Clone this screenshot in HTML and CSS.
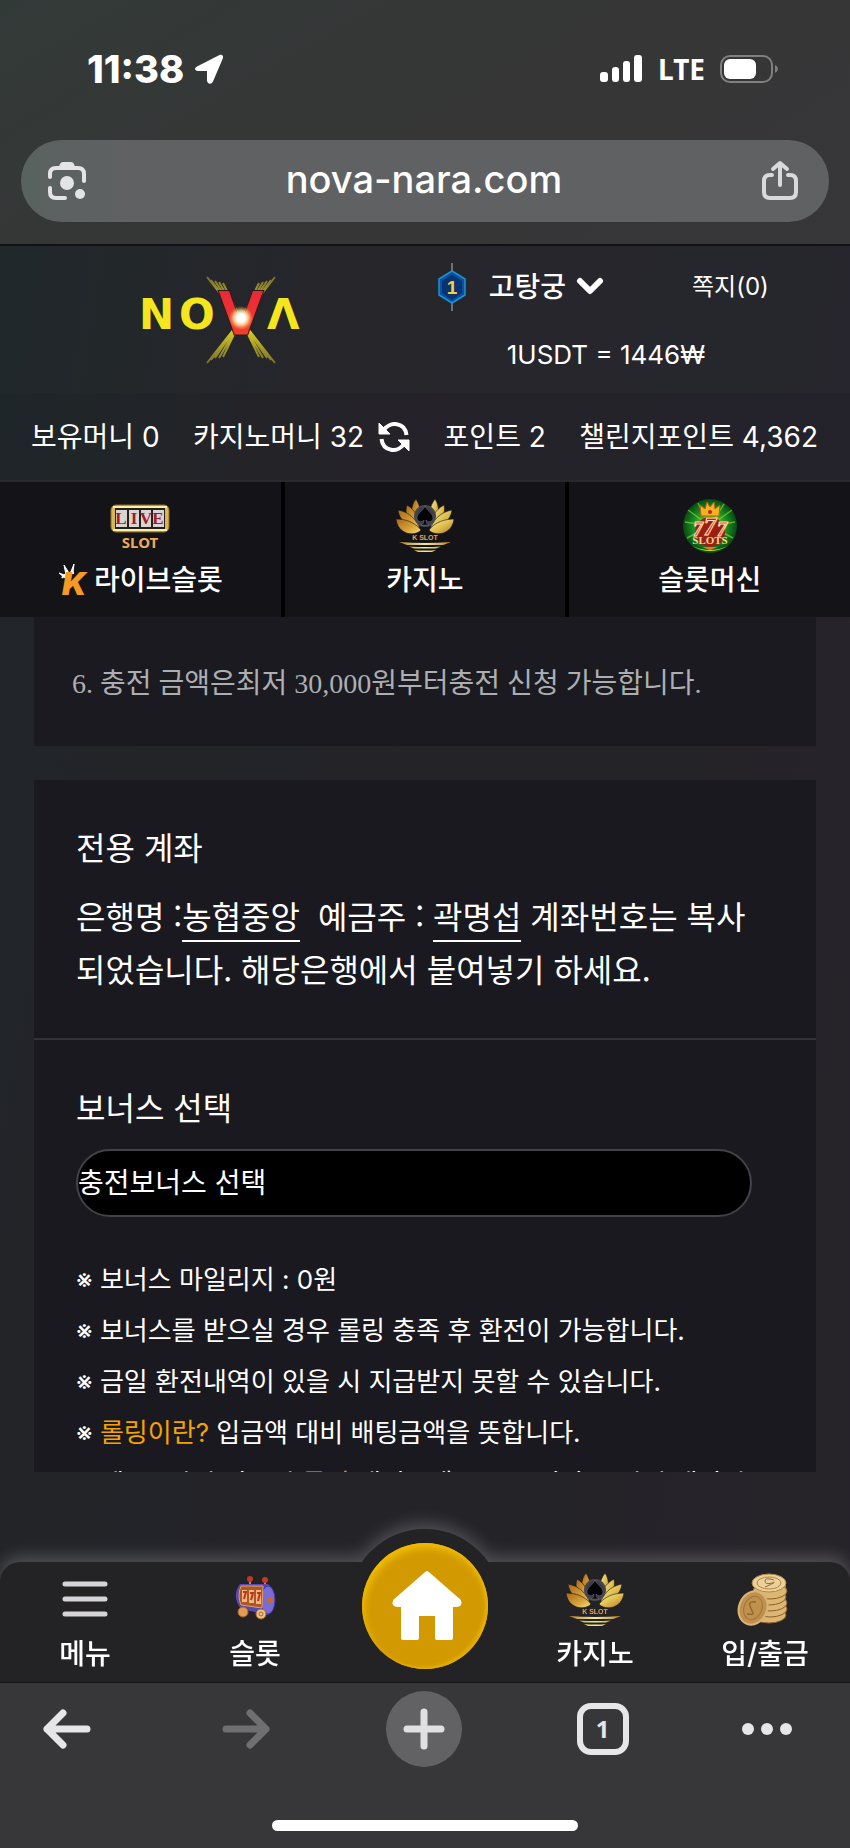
FILE: index.html
```html
<!DOCTYPE html>
<html lang="ko">

<head>
    <meta charset="UTF-8">
    <meta name="viewport" content="width=device-width, initial-scale=1.0">
    <title>nova-nara.com</title>
    <link rel="stylesheet" href="styles.css">
</head>

<body>
    <!-- shared icons -->
    <svg class="sprite" width="0" height="0" aria-hidden="true">
        <defs>
            <linearGradient id="goldLeft" x1="0" y1="0" x2="1" y2="1">
                <stop offset="0" stop-color="#a8671d" />
                <stop offset="0.6" stop-color="#d9a43a" />
                <stop offset="1" stop-color="#f6e27c" />
            </linearGradient>
            <linearGradient id="goldRight" x1="0" y1="0" x2="1" y2="1">
                <stop offset="0" stop-color="#f8f09a" />
                <stop offset="0.5" stop-color="#e0c050" />
                <stop offset="1" stop-color="#b0781f" />
            </linearGradient>
            <linearGradient id="goldBar" x1="0" y1="0" x2="1" y2="0">
                <stop offset="0" stop-color="#b8862b" />
                <stop offset="0.5" stop-color="#f5ec8c" />
                <stop offset="1" stop-color="#b8862b" />
            </linearGradient>
            <radialGradient id="spadeBg">
                <stop offset="0" stop-color="#15151b" />
                <stop offset="1" stop-color="#4c4c58" />
            </radialGradient>
        </defs>
        <symbol id="lotus" viewBox="0 0 60 54">
            <g fill="url(#goldLeft)" stroke="#17161a" stroke-width="0.6">
                <path d="M23 28C15 20 15 8 21 1c5 8 6 17 2 27z" />
                <path d="M24 31C13 25 9 15 12 7c8 5 13 13 12 24z" />
                <path d="M25 33C12 30 4 21 3 12c11 2 20 10 22 21z" />
                <path d="M26 32C20 39 3 37 1 21c9 0 19 3 25 11z" />
            </g>
            <g fill="url(#goldRight)" stroke="#17161a" stroke-width="0.6">
                <path d="M37 28C45 20 45 8 40 1c-6 8-7 17-3 27z" />
                <path d="M36 31C47 25 51 15 49 7c-9 5-14 13-13 24z" />
                <path d="M35 33C48 30 56 21 57 12c-11 2-20 10-22 21z" />
                <path d="M34 32C40 39 57 37 59 21c-9 0-19 3-25 11z" />
            </g>
            <circle cx="30" cy="18" r="11" fill="url(#spadeBg)" />
            <path d="M30 8c-1 4-8 7-8 12 0 4 5 5 7 2 0 3-1 4-3 5h8c-2-1-3-2-3-5 2 3 7 2 7-2 0-5-7-8-8-12z" fill="#050507" stroke="#8d8d98" stroke-width="0.4" />
            <text x="30" y="42" class="lotus-text">K SLOT</text>
            <path d="M4 44q26 2 52 0l-8 3H12zM14 48.500q16 1 32 0l-5 2H19zM19 52q12 1 22 0l-4 2H23z" fill="url(#goldBar)" />
        </symbol>
    </svg>

    <!-- Browser top -->
    <div class="browser-top">
        <div class="status">
            <div class="status-left">
                <span class="clock">11:38</span>
                <svg width="30" height="30" viewBox="0 0 30 30" fill="#fff">
                    <path d="M3 12.500 25 1.200c3-1.500 5 .5 3.700 3.600L19 27.500c-1.500 3.500-6 2.500-6-1V17H4.500C.8 17-.2 14.200 3 12.500z" />
                </svg>
            </div>
            <div class="status-right">
                <svg width="43" height="28" viewBox="0 0 43 28" fill="#fff">
                    <rect x="0" y="17" width="8" height="10" rx="3" />
                    <rect x="12" y="12" width="7" height="15" rx="3" />
                    <rect x="23" y="6" width="7" height="21" rx="3" />
                    <rect x="34" y="0" width="8" height="27" rx="3" />
                </svg>
                <span class="network">LTE</span>
                <svg width="59" height="28" viewBox="0 0 59 28">
                    <rect x="1" y="1" width="51" height="26" rx="9" fill="none" stroke="#7f817f" stroke-width="2" />
                    <rect x="4" y="4" width="32" height="20" rx="6" fill="#fff" />
                    <path d="M55 10q3 1.500 3 4t-3 4z" fill="#7f817f" />
                </svg>
            </div>
        </div>
        <div class="address">
            <button class="plain" aria-label="Lens">
                <svg width="40" height="40" viewBox="0 0 40 40">
                    <g fill="none" stroke="#e3e4e6" stroke-width="4" stroke-linecap="round" stroke-linejoin="round">
                        <path d="M3 16v-3q0-6 6-6h22q6 0 6 6v7" />
                        <path d="M3 27v4q0 6 6 6h9" />
                    </g>
                    <path d="M11 8l2-5q1-2 3-2h8q2 0 3 2l2 5z" fill="#e3e4e6" />
                    <circle cx="20" cy="22" r="7" fill="#e3e4e6" />
                    <circle cx="33" cy="33" r="5" fill="#e3e4e6" />
                </svg>
            </button>
            <span class="url">nova-nara.com</span>
            <button class="plain" aria-label="Share">
                <svg width="38" height="40" viewBox="0 0 38 40" fill="none" stroke="#d9dadc" stroke-width="4" stroke-linecap="round" stroke-linejoin="round">
                    <path d="M11 14H9q-6 0-6 6v11q0 6 6 6h20q6 0 6-6V20q0-6-6-6h-2" />
                    <path d="M19 24V3M12 8l7-6 7 6" />
                </svg>
            </button>
        </div>
    </div>

    <header class="site-header">
        <a href="#" class="logo" aria-label="NOVA">
            <svg width="166" height="90" viewBox="0 0 166 90">
                <defs>
                    <linearGradient id="ray" x1="0" y1="0" x2="0" y2="1">
                        <stop offset="0" stop-color="#77702a" />
                        <stop offset="0.5" stop-color="#f7e825" />
                        <stop offset="1" stop-color="#77702a" />
                    </linearGradient>
                    <radialGradient id="flare">
                        <stop offset="0.35" stop-color="#fff" />
                        <stop offset="0.6" stop-color="#ffe9a0" stop-opacity="0.8" />
                        <stop offset="1" stop-color="#ffb060" stop-opacity="0" />
                    </radialGradient>
                    <linearGradient id="red" x1="0" y1="0" x2="0" y2="1">
                        <stop offset="0" stop-color="#e8203c" />
                        <stop offset="1" stop-color="#f04a22" />
                    </linearGradient>
                </defs>
                <g fill="none" stroke="url(#ray)" stroke-width="2">
                    <path d="M68 2 136 88M72 5l60 80M76 6l52 77M80 7l44 76M84 8l36 74" />
                    <path d="M136 2 68 88M132 5 72 85M128 6 76 83M124 7 80 83M120 8 84 82" />
                </g>
                <text x="0" y="54" class="logo-yellow">N</text>
                <text x="40" y="54" class="logo-yellow">O</text>
                <text x="128" y="54" class="logo-yellow">Λ</text>
                <text x="102" y="60" class="logo-red">V</text>
                <circle cx="102" cy="43" r="12" fill="url(#flare)" />
            </svg>
        </a>
        <div class="account">
            <div class="account-row">
                <svg width="28" height="48" viewBox="0 0 28 48">
                    <path d="M14 0v48" stroke="#8b8a86" stroke-width="1.500" />
                    <path d="M14 8l13 8v16l-13 8-13-8V16z" fill="#0b4f9d" stroke="#1795d8" stroke-width="1.500" />
                    <path d="M14 12l10 6v12l-10 7-10-7V18z" fill="#073373" />
                    <text x="14" y="31" class="level">1</text>
                </svg>
                <a href="#" class="user">고탕궁
                    <svg width="28" height="18" viewBox="0 0 28 18" fill="none" stroke="#fff" stroke-width="6" stroke-linecap="round" stroke-linejoin="round">
                        <path d="M4 3l10 10L24 3" />
                    </svg>
                </a>
                <a href="#" class="message">쪽지(0)</a>
            </div>
            <p class="rate">1USDT = 1446₩</p>
        </div>
    </header>

    <div class="wallet">
        <span>보유머니 0</span>
        <span class="casino-money">카지노머니 32
            <button class="plain" aria-label="새로고침">
                <svg width="32" height="32" viewBox="0 0 32 32">
                    <g fill="none" stroke="#fff" stroke-width="4">
                        <path d="M6 9C12 0 27 1 28.500 14" />
                        <path d="M26 23C20 32 5 31 3.500 18" />
                    </g>
                    <path d="M1 2v11h11zM31 30V19H20z" fill="#fff" stroke="#fff" stroke-linejoin="round" />
                </svg>
            </button>
        </span>
        <span>포인트 2</span>
        <span>챌린지포인트 4,362</span>
    </div>

    <nav class="games">
        <a href="#">
            <svg width="60" height="54" viewBox="0 0 60 54">
                <rect x="1" y="7" width="58" height="27" rx="5" fill="#d9b654" stroke="#8e6b24" />
                <path d="M3 9h54M3 32h54" stroke="#fbf0a4" stroke-width="2" />
                <rect x="5" y="10" width="50" height="21" fill="#24201d" />
                <path d="M6 12h11v17H6zM19 12h10v17H19zM31 12h10v17H31zM43 12h11v17H43z" fill="#d9d3d2" />
                <text x="11" y="26" class="live">L</text>
                <text x="24" y="26" class="live">I</text>
                <text x="36" y="26" class="live">V</text>
                <text x="48" y="26" class="live">E</text>
                <text x="30" y="50" class="slot">SLOT</text>
            </svg>
            <span class="game-name">
                <svg width="34" height="36" viewBox="0 0 34 36">
                    <path d="M1 11l8 3-2 2zM6 3l5 8-3 2zM16 2l-1 9-3 1z" fill="#fff" stroke="#fff" />
                    <path d="M4 16q4-6 12-5" fill="none" stroke="#fff" stroke-width="2" />
                    <text x="4" y="33" class="k-mark">K</text>
                </svg>
                라이브슬롯
            </span>
        </a>
        <a href="#">
            <svg width="60" height="54">
                <use href="#lotus" />
            </svg>
            <span class="game-name">카지노</span>
        </a>
        <a href="#">
            <svg width="56" height="56" viewBox="0 0 56 56">
                <defs>
                    <radialGradient id="green">
                        <stop offset="0" stop-color="#a4ef28" />
                        <stop offset="0.6" stop-color="#1f9222" />
                        <stop offset="1" stop-color="#064a12" />
                    </radialGradient>
                </defs>
                <circle cx="28" cy="28" r="27" fill="url(#green)" />
                <path d="M28 28 6 12M28 28 3 24M28 28 50 12M28 28 53 24M28 28 5 40M28 28 51 40M28 28 16 5M28 28 42 6" stroke="#8be23a" stroke-width="1.500" opacity="0.6" />
                <path d="M10 48q18 8 36 0-18 10-36 0z" fill="#c6de34" />
                <path d="M19 18 18 7l5 4 2-7 3 5 4-5 1 7 5-4-1 11z" fill="#f6b023" stroke="#b0650d" />
                <circle cx="28" cy="14" r="2" fill="#c3201c" />
                <circle cx="28" cy="34" r="15" fill="#9a2013" />
                <text x="16" y="38" class="seven">7</text>
                <text x="40" y="38" class="seven">7</text>
                <text x="28" y="37" class="seven big">7</text>
                <text x="28" y="46" class="slots">SLOTS</text>
                <path d="M20 49h16l-8 3z" fill="#e87a20" />
            </svg>
            <span class="game-name">슬롯머신</span>
        </a>
    </nav>

    <main>
        <section class="notice">
            <p>6. 충전 금액은최저 30,000원부터충전 신청 가능합니다.</p>
        </section>

        <section class="charge">
            <div class="block">
                <h2>전용 계좌</h2>
                <p class="bank">은행명 :<span class="underline">농협중앙</span>&nbsp; 예금주 : <span class="underline">곽명섭</span> 계좌번호는 복사되었습니다. 해당은행에서 붙여넣기 하세요.</p>
            </div>
            <div class="block">
                <h2><label for="bonus">보너스 선택</label></h2>
                <select id="bonus" class="bonus-select">
                    <option>충전보너스 선택</option>
                </select>
                <ul class="guide">
                    <li>※ 보너스 마일리지 : 0원</li>
                    <li>※ 보너스를 받으실 경우 롤링 충족 후 환전이 가능합니다.</li>
                    <li>※ 금일 환전내역이 있을 시 지급받지 못할 수 있습니다.</li>
                    <li>※ <b>롤링이란?</b> 입금액 대비 배팅금액을 뜻합니다.</li>
                    <li>※ 예) <b>10만원</b> 입금시 <b>롤링</b> 배팅금액 100% 이상 <b>10만원</b> 배팅시</li>
                </ul>
            </div>
        </section>
    </main>

    <nav class="dock">
        <a href="#">
            <svg width="54" height="54" viewBox="0 0 54 54" stroke="#d6d4d9" stroke-width="5" stroke-linecap="round">
                <path d="M7 12h40M7 27h40M7 42h40" />
            </svg>
            메뉴
        </a>
        <a href="#">
            <svg width="54" height="54" viewBox="0 0 54 54">
                <path d="M22 8v8M37 9v8" stroke="#b98b5b" stroke-width="2" />
                <circle cx="22" cy="7" r="3" fill="#c13a25" />
                <circle cx="37" cy="8" r="3" fill="#c13a25" />
                <path d="M12 12h28q8 6 7 17-1 11-7 14L13 37Q3 24 12 12z" fill="#5a46b5" />
                <ellipse cx="40" cy="28" rx="7" ry="14" fill="#7a6cd6" stroke="#4433a0" />
                <path d="M13 14h22l-1 22-21-3q-4-9 0-19z" fill="#a65a2c" stroke="#e0a164" />
                <path d="M14 18h5v12h-5zM21 18h5v13h-5zM28 18h5v14h-5z" fill="#f0b878" />
                <path d="M15 20h3l-2 7M22 21h3l-2 7M29 21h3l-2 8" fill="none" stroke="#c2301f" stroke-width="2" />
                <circle cx="42" cy="28" r="3" fill="#c86a2a" />
                <circle cx="15" cy="40" r="5" fill="#e39b50" stroke="#a5622c" />
                <circle cx="33" cy="42" r="5" fill="#eec487" stroke="#a5622c" />
                <circle cx="33" cy="42" r="2" fill="none" stroke="#a5622c" />
            </svg>
            슬롯
        </a>
        <div class="home-cell">
            <a href="#" class="home" aria-label="홈">
                <svg width="72" height="72" viewBox="0 0 72 72" fill="#fff" stroke="#fff" stroke-width="4" stroke-linejoin="round">
                    <path d="M38 3 6 31q-2 4 3 4h5v33h14V44h20v24h14V35h5q5 0 3-4z" />
                </svg>
            </a>
        </div>
        <a href="#">
            <svg width="60" height="54">
                <use href="#lotus" />
            </svg>
            카지노
        </a>
        <a href="#">
            <svg width="54" height="54" viewBox="0 0 54 54">
                <path d="M16 10v34q16 12 32 1V10z" fill="#b98642" />
                <g fill="#dcb673" stroke="#8f6028" stroke-width="1">
                    <ellipse cx="31" cy="43" rx="17" ry="8" />
                    <ellipse cx="32" cy="37" rx="17" ry="8" />
                    <ellipse cx="32" cy="31" rx="17" ry="8" />
                    <ellipse cx="31" cy="25" rx="17" ry="8" />
                    <ellipse cx="32" cy="19" rx="17" ry="8" />
                </g>
                <ellipse cx="31" cy="11" rx="17" ry="9" fill="#ecd09a" stroke="#b28847" />
                <ellipse cx="31" cy="11" rx="12" ry="6" fill="none" stroke="#b28847" />
                <path d="M36 8q-9-3-9 1t7 2-7 4" fill="none" stroke="#946a30" />
                <ellipse cx="15" cy="36" rx="14" ry="17" transform="rotate(22 15 36)" fill="#c0904f" stroke="#d9b478" stroke-width="2" />
                <ellipse cx="15" cy="36" rx="9" ry="12" transform="rotate(22 15 36)" fill="none" stroke="#a37336" />
                <path d="M18 30q-8-1-6 4t3 7-6 1" fill="none" stroke="#946a30" stroke-width="1.500" />
            </svg>
            입/출금
        </a>
    </nav>

    <!-- Browser bottom -->
    <footer class="browser-bottom">
        <div class="toolbar">
            <button class="plain" aria-label="Back">
                <svg width="50" height="42" viewBox="0 0 50 42" fill="none" stroke="#e6e5e8" stroke-width="7" stroke-linecap="round" stroke-linejoin="round">
                    <path d="M45 21H5M21 5 5 21l16 16" />
                </svg>
            </button>
            <button class="plain" aria-label="Forward">
                <svg width="50" height="42" viewBox="0 0 50 42" fill="none" stroke="#6f6f71" stroke-width="7" stroke-linecap="round" stroke-linejoin="round">
                    <path d="M5 21h40M29 5l16 16-16 16" />
                </svg>
            </button>
            <button class="plain" aria-label="New tab">
                <svg width="76" height="76" viewBox="0 0 76 76">
                    <circle cx="38" cy="38" r="38" fill="#626264" />
                    <path d="M38 21v34M21 38h34" stroke="#e0dfe2" stroke-width="7" stroke-linecap="round" />
                </svg>
            </button>
            <button class="plain" aria-label="Tabs">
                <span class="tabs">1</span>
            </button>
            <button class="plain more" aria-label="More">
                <svg width="50" height="12" viewBox="0 0 50 12" fill="#e6e5e8">
                    <circle cx="6" cy="6" r="6" />
                    <circle cx="25" cy="6" r="6" />
                    <circle cx="44" cy="6" r="6" />
                </svg>
            </button>
        </div>
        <div class="indicator"></div>
    </footer>
</body>

</html>
```

FILE: styles.css
```css
* {
    box-sizing: border-box;
}

body {
    margin: 0;
    height: 100vh;
    display: flex;
    flex-direction: column;
    overflow: hidden;
    font-family: Inter, "Noto Sans CJK KR", sans-serif;
    font-size: 28px;
    line-height: 36px;
    color: #fff;
    background: linear-gradient(100deg, #212529 0%, #242328 60%, #27232a 100%);
}

a {
    color: inherit;
    text-decoration: none;
}

h2,
p,
ul {
    margin: 0;
    padding: 0;
}

svg {
    display: block;
    flex: none;
    overflow: visible;
}

.sprite {
    position: absolute;
}

.plain {
    display: flex;
    align-items: center;
    justify-content: center;
    padding: 0;
    border: none;
    background: none;
    color: inherit;
}

/* Browser top */
.browser-top {
    flex: none;
    padding: 48px 21px 22px;
    background: linear-gradient(150deg, #323a38 0%, #363636 50%, #37373a 100%);
    border-bottom: 2px solid #111114;
}

.status {
    display: flex;
    justify-content: space-between;
    align-items: center;
    height: 42px;
    padding: 0 50px 0 66px;
    margin-bottom: 50px;
}

.status-left,
.status-right {
    display: flex;
    align-items: center;
}

.status-left {
    gap: 10px;
}

.status-right {
    gap: 15px;
}

.clock {
    font-size: 38px;
    font-weight: 800;
}

.network {
    font-family: "Noto Sans", sans-serif;
    font-size: 28px;
    font-weight: 700;
}

.address {
    display: flex;
    justify-content: space-between;
    align-items: center;
    height: 82px;
    padding: 0 30px 0 26px;
    border-radius: 41px;
    background: linear-gradient(90deg, #59625f 0%, #606163 14%, #606163 100%);
}

.url {
    padding-bottom: 4px;
    font-size: 38px;
    font-weight: 500;
}

/* Site header */
.site-header {
    flex: none;
    display: grid;
    grid-template-columns: 103fr 97fr;
    align-items: center;
    height: 147px;
    background: linear-gradient(100deg, #20282a 0%, #26262b 35%, #27262e 100%);
}

.logo {
    justify-self: center;
    padding-left: 6px;
}

.logo-yellow {
    font: bold 42px "DejaVu Sans", sans-serif;
    fill: #f5e51f;
}

.logo-red {
    font: bold 60px "DejaVu Sans", sans-serif;
    text-anchor: middle;
    fill: url(#red);
    stroke: #2a1a1c;
    stroke-width: 1px;
}

.account {
    padding-bottom: 4px;
}

.account-row {
    display: flex;
    align-items: center;
    height: 48px;
    margin-bottom: 26px;
}

.level {
    font: bold 19px "Liberation Sans", sans-serif;
    text-anchor: middle;
    fill: #f3cf3c;
}

.user {
    display: flex;
    align-items: center;
    gap: 10px;
    margin-left: 23px;
    font-weight: 500;
}

.message {
    margin-left: 88px;
    font-size: 24px;
}

.rate {
    padding-left: 69px;
    font-size: 26px;
}

.wallet {
    flex: none;
    display: flex;
    justify-content: space-between;
    align-items: center;
    height: 89px;
    padding: 0 32px 0 31px;
    background: linear-gradient(100deg, #1f2628 0%, #242328 35%, #24222b 100%);
    border-bottom: 2px solid #29282d;
}

.casino-money {
    display: flex;
    align-items: center;
    gap: 14px;
}

/* Games */
.games {
    flex: none;
    display: grid;
    grid-template-columns: repeat(3, 1fr);
    gap: 4px;
    height: 135px;
    background-color: #000;
}

.games a {
    display: flex;
    flex-direction: column;
    align-items: center;
    justify-content: space-between;
    padding: 16px 0 19px;
    background-color: #141317;
}

.game-name {
    display: flex;
    align-items: center;
    gap: 2px;
    font-weight: 500;
}

.lotus-text {
    font: bold 7px "Liberation Sans", sans-serif;
    text-anchor: middle;
    fill: #e0a55c;
}

.live {
    font: bold 17px "Liberation Serif", serif;
    text-anchor: middle;
    fill: #a01a2c;
}

.slot {
    font: bold 15px "Noto Sans", sans-serif;
    text-anchor: middle;
    fill: #efab58;
}

.k-mark {
    font: italic 900 32px Inter, sans-serif;
    fill: #f59a22;
}

.seven {
    font: italic bold 20px "Liberation Serif", serif;
    text-anchor: middle;
    fill: #d81a18;
    stroke: #ffe3b0;
    stroke-width: 1px;
}

.big {
    font-size: 25px;
}

.slots {
    font: bold 11px "Liberation Serif", serif;
    text-anchor: middle;
    fill: #ffd28a;
}

/* Content */
main {
    flex: 1;
    min-height: 0;
    overflow: hidden;
    padding: 0 34px;
    margin-bottom: 90px;
}

.notice {
    margin-bottom: 34px;
    padding: 49px 38px 44px;
    background-color: #1b1a20;
    color: #acafb2;
    font-family: "Liberation Serif", "Noto Sans CJK KR", serif;
    font-size: 28px;
}

.charge {
    background-color: #1a1920;
}

.block {
    padding: 51px 64px 43px 42px;
}

.block + .block {
    border-top: 2px solid #333237;
}

h2 {
    margin-bottom: 22px;
    font-size: 32px;
    font-weight: 400;
}

.bank {
    font-family: "Noto Sans CJK KR", sans-serif;
    font-size: 32px;
    line-height: 53px;
}

.underline {
    padding-bottom: 2px;
    border-bottom: 2px solid #fff;
}

.bonus-select {
    display: block;
    appearance: none;
    width: 100%;
    height: 68px;
    padding: 0;
    border: 2px solid #434247;
    border-radius: 34px;
    background-color: #000;
    color: #fff;
    font: inherit;
}

.guide {
    margin-top: 37px;
    list-style: none;
    font-size: 26px;
    line-height: 51px;
    white-space: nowrap;
}

.guide b {
    color: #f5a300;
    font-weight: 400;
}

/* Dock */
.dock {
    flex: none;
    display: grid;
    grid-template-columns: repeat(5, 1fr);
    height: 120px;
    border-radius: 20px 20px 0 0;
    background-color: #232225;
    filter: drop-shadow(0 -6px 8px rgba(255, 255, 255, 0.2));
}

.dock > a {
    display: flex;
    flex-direction: column;
    align-items: center;
    gap: 10px;
    padding-top: 10px;
    font-weight: 500;
}

.home-cell {
    justify-self: center;
    width: 154px;
    height: 154px;
    margin-top: -33px;
    padding: 14px;
    border-radius: 50%;
    background-color: #232225;
}

.home {
    display: flex;
    align-items: center;
    justify-content: center;
    height: 126px;
    border-radius: 50%;
    background-color: #d29a00;
    box-shadow: inset 2px 5px 7px #f2bd00, inset -3px -2px 3px #e5ad00;
}

/* Browser bottom */
.browser-bottom {
    flex: none;
    position: relative;
    display: flex;
    flex-direction: column;
    justify-content: space-between;
    height: 166px;
    padding: 8px 0 17px;
    border-top: 1px solid #131315;
    background-color: #373739;
}

.toolbar {
    display: flex;
    justify-content: space-between;
    padding: 0 51px 0 21px;
}

.toolbar button {
    width: 92px;
    height: 76px;
}

.toolbar .more {
    width: 64px;
}

.tabs {
    width: 52px;
    height: 52px;
    border: 6px solid #e6e5e8;
    border-radius: 14px;
    font: bold 24px/40px "Noto Sans", sans-serif;
    color: #e6e5e8;
}

.indicator {
    align-self: center;
    width: 36%;
    height: 11px;
    border-radius: 6px;
    background-color: #fff;
}
```
